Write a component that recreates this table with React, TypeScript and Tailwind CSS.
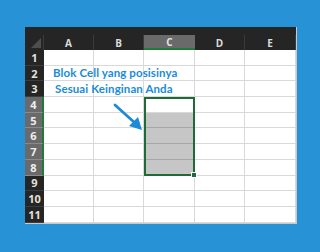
import React from 'react'

const COLS = [
  { key: 'A', w: 'w-[50px]' },
  { key: 'B', w: 'w-[50px]' },
  { key: 'C', w: 'w-[51px]' },
  { key: 'D', w: 'w-[50px]' },
  { key: 'E', w: 'w-[51px]' },
]

const ROWS = [1, 2, 3, 4, 5, 6, 7, 8, 9, 10, 11]
const SELECTED = [4, 5, 6, 7, 8]

// text that spills out of column A over the next cells
const NOTES: Record<number, { text: string; pad: string }> = {
  2: { text: 'Blok Cell yang posisinya', pad: 'pl-[9px]' },
  3: { text: 'Sesuai Keinginan Anda', pad: 'pl-[11px]' },
}

const font = { fontFamily: '"Open Sans", "Noto Sans", sans-serif' }

export default function App() {
  return (
    <div className="w-[320px] h-[252px] bg-[#2892d7] pt-[27px] pl-[25px] overflow-hidden" style={font}>
      <div className="relative w-[272px] bg-[#252525] pt-[8px] border-r border-b border-[#c9c9c9]">
        {/* column headers */}
        <div className="flex h-[15px]">
          <div className="w-[19px] flex items-end justify-end p-[2px] border-r border-[#3a3a3a]">
            <div
              className="w-[10px] h-[10px] bg-[#4e4e4e]"
              style={{ clipPath: 'polygon(100% 0, 100% 100%, 0 100%)' }}
            />
          </div>
          {COLS.map((c) => (
            <div
              key={c.key}
              className={`${c.w} flex items-center justify-center text-[10px] font-bold leading-none ${
                c.key === 'C'
                  ? 'bg-[#6a6a6a] text-[#e4e4e4] border-b-2 border-[#1f7a3c]'
                  : 'text-[#dcdcdc] border-r border-[#3a3a3a]'
              }`}
            >
              {c.key}
            </div>
          ))}
        </div>

        {ROWS.map((r) => (
          <Row key={r} n={r} />
        ))}

        {/* selection C4:C8 */}
        <div className="absolute left-[119px] top-[70px] w-[51px] h-[79px] border-2 border-[#1e6b38] pointer-events-none">
          <div className="absolute -right-[4px] -bottom-[4px] w-[6px] h-[6px] bg-[#1e6b38] border border-white" />
        </div>

        <Arrow />
      </div>
    </div>
  )
}

function Row({ n }: { n: number }) {
  const sel = SELECTED.includes(n)
  const note = NOTES[n]
  return (
    <div className="flex h-[15.7px]">
      <div
        className={`w-[19px] flex items-center justify-center text-[11px] font-bold leading-none border-b ${
          sel
            ? 'bg-[#6a6a6a] text-[#eeeeee] border-[#8a8a8a] border-r-2 border-r-[#1f7a3c]'
            : 'text-[#e6e2dc] border-[#3c3c3c]'
        }`}
      >
        {n}
      </div>
      {COLS.map((c) => {
        const gray = c.key === 'C' && n >= 5 && n <= 8
        return (
          <div
            key={c.key}
            className={`${c.w} flex items-center border-r border-b ${
              gray ? 'bg-[#c6c6c6] border-[#a6a6a6]' : 'bg-white border-[#d9d9d9]'
            } ${c.key === 'A' && note ? note.pad : ''}`}
          >
            {c.key === 'A' && note && (
              <span className="relative z-10 whitespace-nowrap font-['Lato',sans-serif] text-[11.5px] font-bold leading-none tracking-[0.1px] text-[#1b8bd8]">
                {note.text}
              </span>
            )}
          </div>
        )
      })}
    </div>
  )
}

function Arrow() {
  return (
    <svg className="absolute left-[86px] top-[74px] pointer-events-none" width="34" height="32" viewBox="0 0 34 32" aria-hidden>
      <line x1="4" y1="4" x2="24" y2="22" stroke="#1b8bd8" strokeWidth="2.8" strokeLinecap="round" />
      <polygon points="31,29 18,25 27,16" fill="#1b8bd8" />
    </svg>
  )
}
